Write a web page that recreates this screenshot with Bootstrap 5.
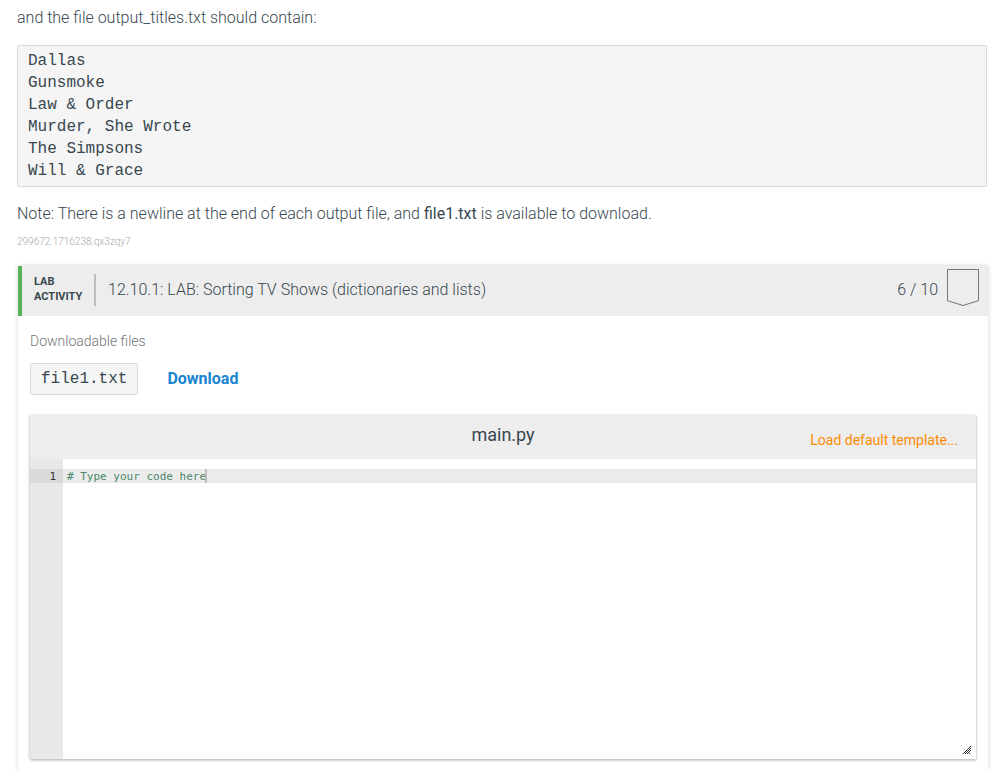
<!DOCTYPE html>
<html lang="en">
<head>
<meta charset="utf-8">
<meta name="viewport" content="width=device-width, initial-scale=1">
<title>12.10.1: LAB: Sorting TV Shows</title>
<link href="https://cdn.jsdelivr.net/npm/bootstrap@5.3.0/dist/css/bootstrap.min.css" rel="stylesheet">
<style>
body { font-family: Roboto, sans-serif; font-size: 16px; font-weight: 300; line-height: 22px; color: #37474f; background: #fff; }
.page { padding: 7px 4px 0 17px; }
.output, .file-name { font-family: "Liberation Mono", "Courier New", monospace; font-size: 16px; font-weight: 400; line-height: 22px; color: #37474f; background: #f5f5f5; border: 1px solid #d9d9d9; border-radius: 2px; }
.output { padding: 4px 10px; margin: 16px 2px 16px 0; }
.file-name { padding: 4px 10px; }
.term { font-weight: 400; }
.resource-id { font-size: 10px; line-height: 12px; font-weight: 300; color: #a8a8a8; margin: 11px 0 18px; }
.activity { margin: 0 1px; box-shadow: 0 0 4px rgba(0,0,0,.2); }
.activity-head { height: 50px; background: #ededed; border-left: 4px solid #56b359; padding: 0 9px 2px 12px; }
.activity-type { width: 62px; height: 32px; border-right: 2px solid #bdbdbd; font-size: 11px; line-height: 15px; font-weight: 700; }
.activity-title { font-size: 16px; line-height: 22px; font-weight: 300; padding-left: 12px; }
.score { margin-right: 9px; }
.activity-body { padding: 14px 12px 0; }
.caption { font-size: 14px; color: #757575; }
.download { font-weight: 700; color: #1885d1; text-decoration: none; }
.files { gap: 29px; margin: 11px 0 20px; }
.editor { box-shadow: 0 1px 3px rgba(0,0,0,.35); }
.editor-head { height: 44px; background: #ededed; padding: 0 18px; }
.editor-title { font-size: 18px; line-height: 24px; font-weight: 400; padding-bottom: 4px; }
.reset { font-size: 14px; line-height: 20px; font-weight: 400; color: #fb8c00; padding-top: 5px; }
.editor-body { height: 300px; font-family: "DejaVu Sans Mono", monospace; font-size: 11px; line-height: 14px; font-weight: 400; }
.gutter { width: 33px; padding-top: 10px; background: #e8e8e8; color: #333; }
.gutter-line { height: 14px; line-height: 16px; background: #dadada; padding-right: 7px; }
.code { font: inherit; color: #4c886b; padding: 11px 4px 0; resize: none; outline: 0; background: linear-gradient(#ececec, #ececec) 0 10px / 100% 14px no-repeat #fff; }
.caret { left: calc(3px + 21ch); top: 10px; width: 2px; height: 14px; background: #bcbcbc; }
.grip { right: 5px; bottom: 5px; }
</style>
</head>
<body>
<main class="page d-flex flex-column min-vh-100">
  <p class="mb-0">and the file output_titles.txt should contain:</p>
  <pre class="output">Dallas
Gunsmoke
Law &amp; Order
Murder, She Wrote
The Simpsons
Will &amp; Grace</pre>
  <p class="mb-0">Note: There is a newline at the end of each output file, and <span class="term">file1.txt</span> is available to download.</p>
  <div class="resource-id">299672.1716238.qx3zqy7</div>

  <section class="activity flex-grow-1">
    <header class="activity-head d-flex align-items-center">
      <div class="activity-type flex-shrink-0">LAB<br>ACTIVITY</div>
      <h1 class="activity-title flex-grow-1 mb-0">12.10.1: LAB: Sorting TV Shows (dictionaries and lists)</h1>
      <span class="score text-nowrap">6 / 10</span>
      <svg class="flex-shrink-0 mb-1" width="32" height="38" viewBox="0 0 32 38" fill="none" stroke="#757575" aria-hidden="true"><path d="M.5.5h31v31.200L16 36.500.5 31.700z"/></svg>
    </header>
    <div class="activity-body">
      <div class="caption">Downloadable files</div>
      <div class="files d-flex align-items-center">
        <span class="file-name">file1.txt</span>
        <a class="download" href="#">Download</a>
      </div>
      <div class="editor">
        <div class="editor-head row g-0 align-items-center">
          <div class="col"></div>
          <label class="editor-title col-auto" for="code">main.py</label>
          <div class="col text-end"><button type="button" class="reset btn border-0 px-0 pb-0">Load default template...</button></div>
        </div>
        <div class="editor-body d-flex position-relative">
          <div class="gutter flex-shrink-0 text-end"><div class="gutter-line">1</div></div>
          <div class="flex-grow-1 position-relative">
            <textarea id="code" class="code d-block w-100 h-100 border-0" spellcheck="false"># Type your code here</textarea>
            <span class="caret position-absolute"></span>
          </div>
          <svg class="grip position-absolute" width="8" height="8" viewBox="0 0 8 8" fill="#333" shape-rendering="crispEdges" aria-hidden="true"><path d="M7 0h1v1H7zM6 1h1v1H6zM5 2h1v1H5zM7 2h1v1H7zM4 3h1v1H4zM6 3h1v1H6zM3 4h1v1H3zM5 4h1v1H5zM7 4h1v1H7zM2 5h1v1H2zM4 5h1v1H4zM6 5h1v1H6zM1 6h1v1H1zM3 6h1v1H3zM5 6h1v1H5zM0 7h1v1H0zM2 7h1v1H2zM4 7h1v1H4zM6 7h1v1H6z"/></svg>
        </div>
      </div>
    </div>
  </section>
</main>
<script src="https://cdn.jsdelivr.net/npm/bootstrap@5.3.0/dist/js/bootstrap.bundle.min.js"></script>
</body>
</html>
